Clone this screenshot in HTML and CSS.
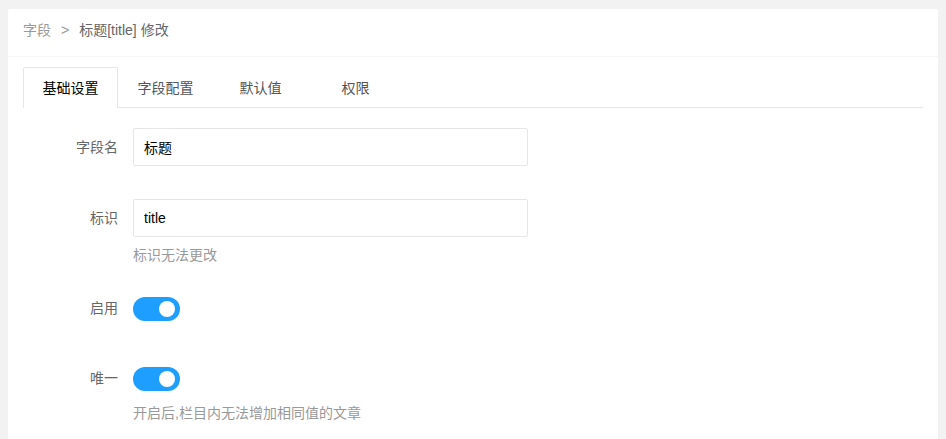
FILE: index.html
```html
<!DOCTYPE html>
<html lang="zh-CN">
<head>
  <meta charset="UTF-8">
  <meta name="viewport" content="width=device-width, initial-scale=1.0">
  <title>标题[title] 修改</title>
  <link rel="stylesheet" href="styles.css">
</head>
<body>
  <div class="card">
    <div class="card-header">
      <span class="crumb">字段</span><span class="sep">&gt;</span><span class="crumb-current">标题[title] 修改</span>
    </div>
    <div class="card-body">
      <ul class="tab-title">
        <li class="active">基础设置</li>
        <li>字段配置</li>
        <li>默认值</li>
        <li>权限</li>
      </ul>

      <form class="form">
        <!-- 字段名 -->
        <div class="form-item item-name">
          <label class="form-label">字段名</label>
          <div class="input-block">
            <input class="input" type="text" value="标题">
          </div>
        </div>

        <!-- 标识 -->
        <div class="form-item item-key">
          <label class="form-label">标识</label>
          <div class="input-block">
            <input class="input" type="text" value="title" readonly>
            <div class="aux">标识无法更改</div>
          </div>
        </div>

        <!-- 启用 -->
        <div class="form-item item-enable">
          <label class="form-label">启用</label>
          <div class="input-block">
            <span class="switch on"><i></i></span>
          </div>
        </div>

        <!-- 唯一 -->
        <div class="form-item item-unique">
          <label class="form-label">唯一</label>
          <div class="input-block">
            <span class="switch on"><i></i></span>
            <div class="aux aux-switch">开启后,栏目内无法增加相同值的文章</div>
          </div>
        </div>
      </form>
    </div>
  </div>
</body>
</html>
```

FILE: styles.css
```css
* {
  box-sizing: border-box;
}
body {
  margin: 0;
  padding: 9px 8px 0;
  background-color: #f2f2f2;
  font-family: "Liberation Sans", "Noto Sans CJK SC", sans-serif;
  font-size: 14px;
  color: #333;
}
.card {
  background-color: #fff;
  border-radius: 2px;
  height: 440px;
}
.card-header {
  height: 48px;
  line-height: 42px;
  padding: 0 15px;
  border-bottom: 1px solid #f6f6f6;
  color: #666;
}
.crumb {
  color: #999;
}
.sep {
  color: #999;
  margin: 0 10px;
}
.crumb-current {
  color: #666;
}
.card-body {
  padding: 10px 15px;
}
.tab-title {
  display: flex;
  margin: 0;
  padding: 0;
  list-style: none;
  height: 41px;
  border-bottom: 1px solid #e6e6e6;
}
.tab-title li {
  min-width: 95px;
  padding: 0 15px;
  height: 40px;
  line-height: 40px;
  text-align: center;
  color: #555;
  border: 1px solid transparent;
  border-bottom: none;
}
.tab-title li.active {
  color: #000;
  background-color: #fff;
  border-color: #e6e6e6;
  border-radius: 2px 2px 0 0;
  height: 41px;
}
.form {
  margin-top: 20px;
}
.form-item {
  display: flex;
  align-items: flex-start;
}
.item-name {
  margin-bottom: 33px;
}
.item-key {
  margin-bottom: 24px;
}
.item-enable {
  margin-bottom: 32px;
}
.form-label {
  width: 110px;
  padding: 9px 15px;
  line-height: 20px;
  text-align: right;
  color: #666;
}
.input-block {
  width: 395px;
}
.input {
  display: block;
  width: 100%;
  height: 38px;
  padding: 0 10px;
  border: 1px solid #e6e6e6;
  border-radius: 2px;
  font-family: inherit;
  font-size: 14px;
  color: #000;
  outline: none;
}
.aux {
  margin-top: 8px;
  line-height: 20px;
  color: #999;
}
.aux-switch {
  margin-top: 12px;
}
.switch {
  position: relative;
  display: block;
  width: 47px;
  height: 24px;
  margin-top: 8px;
  border-radius: 12px;
  background-color: #1e9fff;
}
.switch i {
  position: absolute;
  top: 4px;
  right: 5px;
  width: 16px;
  height: 16px;
  border-radius: 50%;
  background-color: #fff;
}
```
